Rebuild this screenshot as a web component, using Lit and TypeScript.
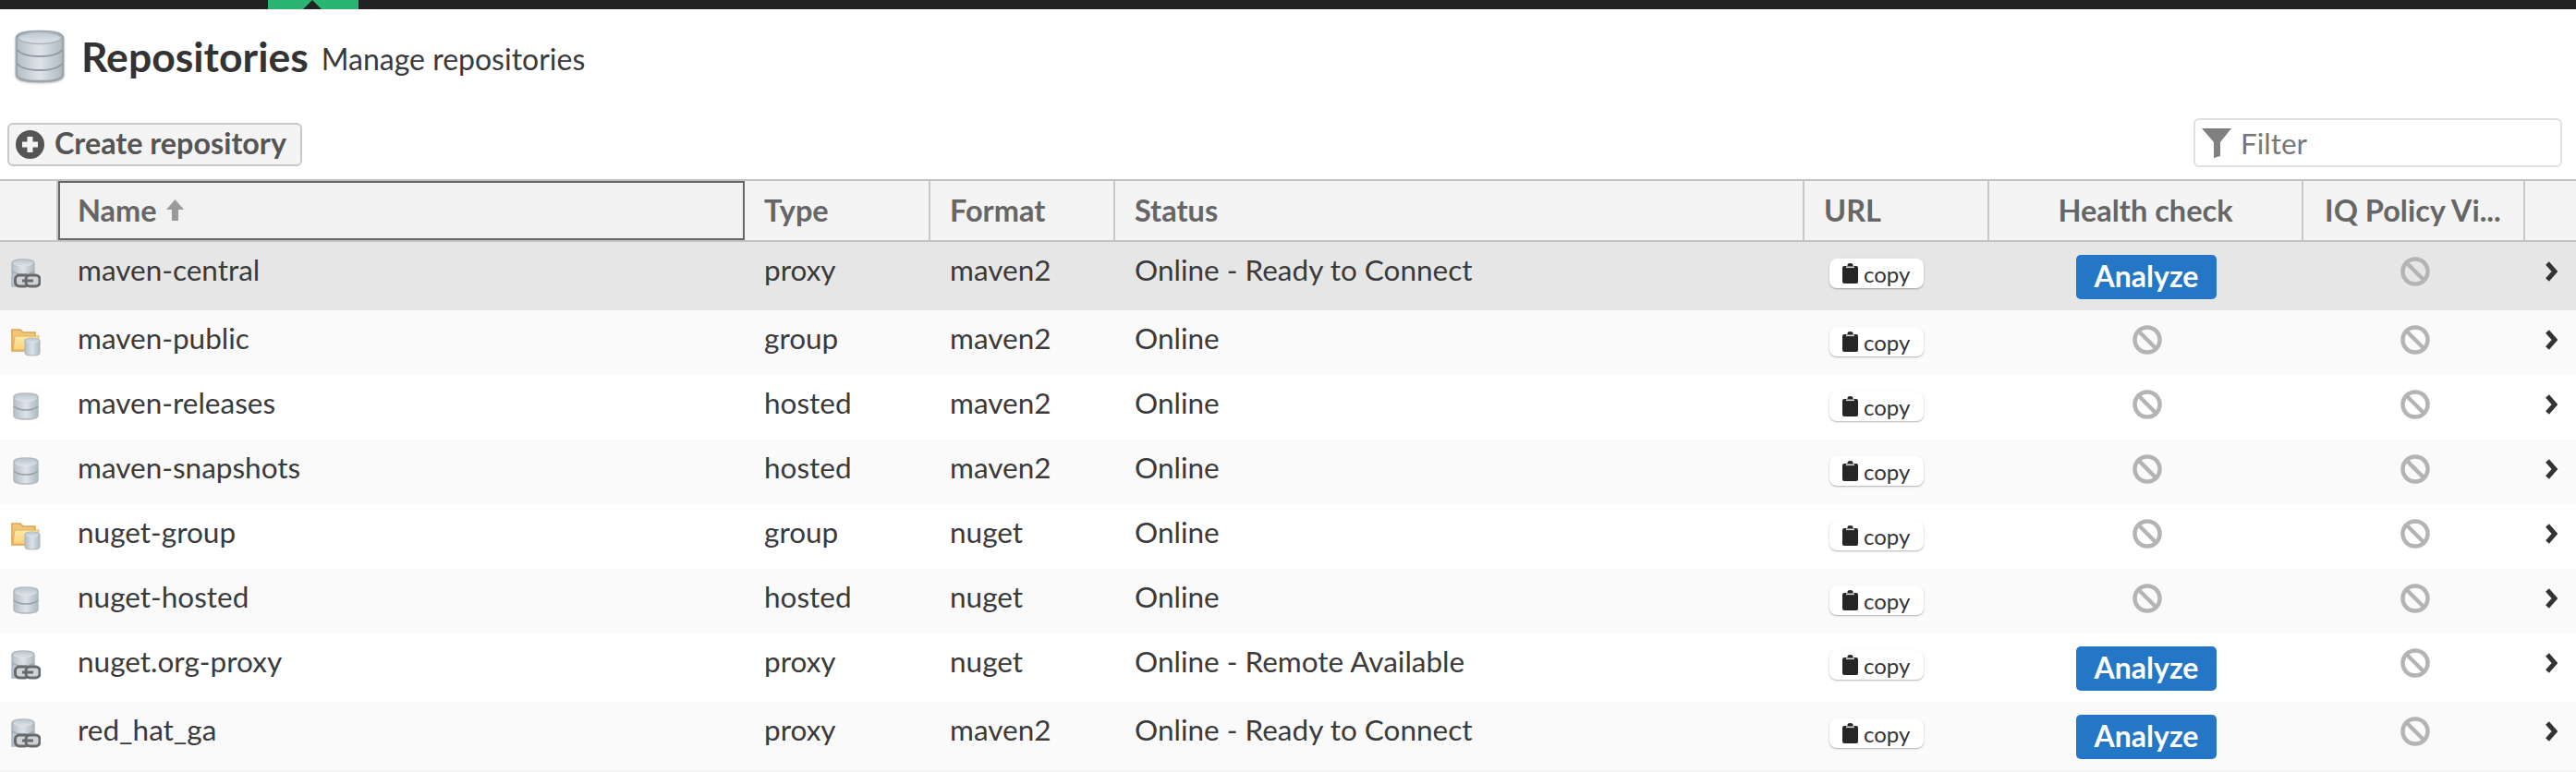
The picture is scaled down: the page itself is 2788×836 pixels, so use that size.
import { LitElement, html, svg, css } from 'lit';
import { customElement } from 'lit/decorators.js';

type Repo = {
  name: string;
  type: 'proxy' | 'group' | 'hosted';
  format: string;
  status: string;
  analyze?: boolean;
  selected?: boolean;
};

const repos: Repo[] = [
  { name: 'maven-central', type: 'proxy', format: 'maven2', status: 'Online - Ready to Connect', analyze: true, selected: true },
  { name: 'maven-public', type: 'group', format: 'maven2', status: 'Online' },
  { name: 'maven-releases', type: 'hosted', format: 'maven2', status: 'Online' },
  { name: 'maven-snapshots', type: 'hosted', format: 'maven2', status: 'Online' },
  { name: 'nuget-group', type: 'group', format: 'nuget', status: 'Online' },
  { name: 'nuget-hosted', type: 'hosted', format: 'nuget', status: 'Online' },
  { name: 'nuget.org-proxy', type: 'proxy', format: 'nuget', status: 'Online - Remote Available', analyze: true },
  { name: 'red_hat_ga', type: 'proxy', format: 'maven2', status: 'Online - Ready to Connect', analyze: true },
];

const defs = svg`
  <defs>
    <linearGradient id="metal" x1="0" x2="1" y1="0" y2="0">
      <stop offset="0" stop-color="#b4bec6" />
      <stop offset="0.5" stop-color="#dde3e8" />
      <stop offset="1" stop-color="#aeb9c1" />
    </linearGradient>
    <linearGradient id="lid" x1="0" x2="0" y1="0" y2="1">
      <stop offset="0" stop-color="#bcc6cd" />
      <stop offset="1" stop-color="#dfe5e9" />
    </linearGradient>
    <linearGradient id="folder" x1="0" x2="0" y1="0" y2="1">
      <stop offset="0" stop-color="#fde9a8" />
      <stop offset="1" stop-color="#f8d27a" />
    </linearGradient>
  </defs>
`;

// three stacked discs, drawn in a 56x58 box
const stack = svg`
  <path d="M2 9C2 4 14 2 28 2s26 2 26 7v40c0 5-12 7-26 7S2 54 2 49z" fill="url(#metal)" stroke="#9aa5ad" stroke-width="2.5" />
  <ellipse cx="28" cy="9" rx="24" ry="6.500" fill="url(#lid)" stroke="#a9b4bc" stroke-width="1.5" />
  <path d="M3 22c4 5 14 7 25 7s21-2 25-7" fill="none" stroke="#8f9aa3" stroke-width="2" />
  <path d="M3 37c4 5 14 7 25 7s21-2 25-7" fill="none" stroke="#8f9aa3" stroke-width="2" />
`;

const hostedIcon = html`<svg class="repo-icon" width="32" height="32" viewBox="0 0 32 32">
  ${defs}
  <path d="M3 6c0-3 6-4 13-4s13 1 13 4v20c0 3-6 4-13 4S3 29 3 26z" fill="url(#metal)" stroke="#b0bac1" stroke-width="1.5" />
  <ellipse cx="16" cy="7" rx="12" ry="4" fill="url(#lid)" />
  <path d="M3 16c3 3 8 4 13 4s10-1 13-4" fill="none" stroke="#929da5" stroke-width="1.5" />
</svg>`;

const proxyIcon = html`<svg class="repo-icon" width="32" height="32" viewBox="0 0 32 32">
  ${defs}
  <path d="M1 5c0-3 5-4 12-4s12 1 12 4v25H1z" fill="url(#metal)" stroke="#adb7be" stroke-width="1.5" />
  <ellipse cx="13" cy="5" rx="11" ry="3.400" fill="url(#lid)" />
  <path d="M1 14c3 2 7 3 12 3s9-1 12-3" fill="none" stroke="#98a3ab" stroke-width="1.2" />
  <rect x="4.500" y="18" width="15" height="12" rx="4.500" fill="#d0d3d5" stroke="#666a6d" stroke-width="3" />
  <rect x="16" y="18" width="15" height="12" rx="4.500" fill="#d0d3d5" stroke="#666a6d" stroke-width="3" />
  <path d="M12 24h12" stroke="#666a6d" stroke-width="3" />
</svg>`;

const groupIcon = html`<svg class="repo-icon" width="32" height="32" viewBox="0 0 32 32">
  ${defs}
  <path d="M1 3h9l3 3h13v20H1z" fill="#f0c778" stroke="#dca550" stroke-width="1.6" />
  <path d="M4 10h26l-4 15H2z" fill="url(#folder)" stroke="#e3b25f" stroke-width="1.2" />
  <path d="M15 15c0-2 3-3 8-3s8 1 8 3v13c0 2-3 3-8 3s-8-1-8-3z" fill="url(#metal)" stroke="#aeb8bf" stroke-width="1.2" />
  <ellipse cx="23" cy="15" rx="7" ry="2.600" fill="url(#lid)" />
</svg>`;

const icons = { proxy: proxyIcon, group: groupIcon, hosted: hostedIcon };

const banIcon = html`<svg class="ban" width="32" height="32" viewBox="0 0 32 32">
  <circle cx="16" cy="16" r="13.500" fill="none" stroke="#b4b4b4" stroke-width="4.500" />
  <path d="M7 7l18 18" stroke="#b4b4b4" stroke-width="4.500" />
</svg>`;

const chevron = html`<svg class="chevron" width="15" height="22" viewBox="0 0 15 22">
  <path d="M3 2l8 9-8 9" fill="none" stroke="#333" stroke-width="5" />
</svg>`;

const clipboard = html`<svg width="17" height="22" viewBox="0 0 17 22">
  <path d="M2 3h3.500V2a3 2 0 0 1 6 0v1H15a2 2 0 0 1 2 2v15a2 2 0 0 1-2 2H2a2 2 0 0 1-2-2V5a2 2 0 0 1 2-2z" fill="#262626" />
  <rect x="4" y="3.500" width="9" height="1.600" fill="#ddd" />
</svg>`;

@customElement('app-root')
export class AppRoot extends LitElement {
  static styles = css`
    :host {
      display: block;
      --cols: 63px 743px 201px 200px 746px 200px 340px 240px 1fr;
      font-family: Lato, 'Open Sans', sans-serif;
      color: #3a3a3a;
      background: #fff;
    }
    .topbar {
      height: 10px;
      background: #222;
      padding-left: 290px;
    }
    .topbar-tab {
      width: 98px;
      height: 10px;
      background: #2ab573;
      clip-path: polygon(0 0, 48px 0, 38px 10px, 58px 10px, 48px 0, 100% 0, 100% 100%, 0 100%);
    }
    .title-row {
      display: flex;
      align-items: center;
      height: 58px;
      margin-top: 22px;
      padding-left: 16px;
    }
    .title-row svg {
      filter: drop-shadow(0 1px 1px rgba(0, 0, 0, 0.3)) blur(0.5px);
    }
    .title-row h1 {
      margin: 0 0 0 18px;
      font-size: 44.500px;
      font-weight: 700;
      line-height: 58px;
      color: #333;
    }
    .title-row span {
      margin: 5px 0 0 14px;
      font-size: 32px;
      line-height: 50px;
    }
    .toolbar {
      display: flex;
      justify-content: space-between;
      align-items: center;
      height: 53px;
      margin-top: 38px;
      padding: 0 15px 0 8px;
      margin-bottom: 13px;
    }
    .create {
      display: flex;
      align-items: center;
      gap: 11px;
      box-sizing: border-box;
      width: 319px;
      height: 47px;
      margin-top: 3px;
      padding: 0 0 0 7px;
      border: 2px solid #c8c8c8;
      border-radius: 6px;
      background: #f4f4f4;
      font: 700 32.300px Lato, sans-serif;
      color: #555;
    }
    .create span {
      margin-top: -3px;
    }
    .filter {
      display: flex;
      align-items: center;
      gap: 10px;
      box-sizing: border-box;
      width: 399px;
      height: 53px;
      padding-left: 7px;
      border: 2px solid #e0e0e0;
      border-radius: 6px;
    }
    .filter input {
      flex: 1;
      min-width: 0;
      border: none;
      outline: none;
      padding: 0;
      font: 400 31.500px Lato, sans-serif;
      background: transparent;
    }
    .filter input::placeholder {
      color: #777;
      opacity: 1;
    }
    .head,
    .row {
      display: grid;
      grid-template-columns: var(--cols);
    }
    .head {
      height: 64px;
      background: #f4f4f4;
      border-top: 2px solid #c2c2c2;
      border-bottom: 2px solid #c2c2c2;
      font-size: 32.500px;
      font-weight: 700;
      color: #666;
    }
    .head > div {
      display: flex;
      align-items: center;
      box-sizing: border-box;
      min-width: 0;
      padding: 0 0 2px 21px;
      border-right: 2px solid #c8c8c8;
      white-space: nowrap;
    }
    .head > div:last-child {
      border-right: none;
    }
    .head .focused {
      border: 2px solid #666;
      background: #f1f1f1;
      padding-left: 19px;
      gap: 9px;
    }
    .head .center {
      justify-content: center;
      padding-left: 0;
    }
    .head .iq {
      padding-left: 23px;
    }
    .row {
      min-height: 70px;
      font-size: 31.500px;
      background: #fff;
    }
    .row:nth-child(even) {
      background: #fafafa;
    }
    .row.selected {
      background: #e6e6e6;
    }
    .cell {
      padding: 11px 0 0 21px;
      line-height: 38px;
      white-space: nowrap;
    }
    .icon-cell {
      padding: 18px 0 0 12px;
    }
    .repo-icon {
      display: block;
      filter: blur(0.6px);
    }
    .ban,
    .chevron {
      display: block;
    }
    .mid {
      display: flex;
      justify-content: center;
      padding: 16px 0 0 2px;
    }
    .copy-cell {
      padding: 18px 0 0 27px;
    }
    .copy {
      display: flex;
      align-items: center;
      gap: 6px;
      box-sizing: border-box;
      width: 102px;
      height: 32px;
      padding-left: 14px;
      border-radius: 8px;
      background: #fff;
      box-shadow: 0 1px 2px rgba(0, 0, 0, 0.3);
      font-size: 24px;
      color: #333;
    }
    .analyze {
      display: block;
      width: 152px;
      height: 48px;
      margin: -2px 0 12px -2px;
      padding: 0 0 3px;
      border: none;
      border-radius: 5px;
      background: #2476c6;
      color: #fff;
      font: 700 32px Lato, sans-serif;
    }
    .chevron-cell {
      padding: 21px 0 0 21px;
    }
    .tail {
      height: 2px;
      background: #f4f4f4;
    }
  `;

  private renderRow(r: Repo) {
    return html`
      <div class="row ${r.selected ? 'selected' : ''}">
        <div class="icon-cell">${icons[r.type]}</div>
        <div class="cell">${r.name}</div>
        <div class="cell">${r.type}</div>
        <div class="cell">${r.format}</div>
        <div class="cell">${r.status}</div>
        <div class="copy-cell"><div class="copy">${clipboard}copy</div></div>
        <div class="mid">${r.analyze ? html`<button class="analyze">Analyze</button>` : banIcon}</div>
        <div class="mid">${banIcon}</div>
        <div class="chevron-cell">${chevron}</div>
      </div>
    `;
  }

  render() {
    return html`
      <div class="topbar"><div class="topbar-tab"></div></div>
      <div class="title-row">
        <svg width="54" height="58" viewBox="0 0 56 58" preserveAspectRatio="none">${defs}${stack}</svg>
        <h1>Repositories</h1>
        <span>Manage repositories</span>
      </div>
      <div class="toolbar">
        <button class="create">
          <svg width="31" height="31" viewBox="0 0 31 31">
            <circle cx="15.500" cy="15.500" r="15.500" fill="#555" />
            <path d="M15.500 7v17M7 15.500h17" stroke="#f4f4f4" stroke-width="6" />
          </svg>
          <span>Create repository</span>
        </button>
        <label class="filter">
          <svg width="32" height="32" viewBox="0 0 32 32">
            <path d="M0 0h32L20 15v15l-7 2V15z" fill="#808080" />
          </svg>
          <input placeholder="Filter" />
        </label>
      </div>
      <div class="head">
        <div></div>
        <div class="focused">
          Name
          <svg width="21" height="23" viewBox="0 0 21 23"><path d="M10.500 0L20 11h-6v12H7V11H1z" fill="#9a9a9a" /></svg>
        </div>
        <div>Type</div>
        <div>Format</div>
        <div>Status</div>
        <div>URL</div>
        <div class="center">Health check</div>
        <div class="iq">IQ Policy Vi...</div>
        <div></div>
      </div>
      <div class="rows">${repos.map((r) => this.renderRow(r))}</div>
      <div class="tail"></div>
    `;
  }
}
